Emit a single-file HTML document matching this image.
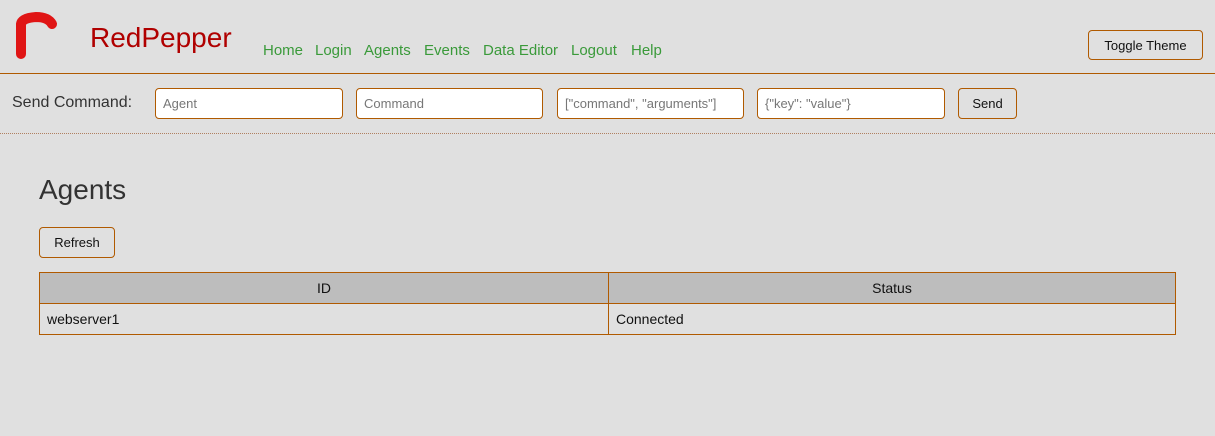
<!DOCTYPE html>
<html><head><style>
body{margin:0;background:#e0e0e0;width:1215px;height:436px;position:relative;font-family:"Liberation Sans",sans-serif;overflow:hidden;color:#333}
.a{position:absolute}
.hdr{top:0;left:0;width:1215px;height:73px;border-bottom:1px solid #b05a00}
.nav a{color:#3a9a3a;text-decoration:none;font-size:15px;position:absolute;top:42px}
.btn{position:absolute;border:1px solid #b05a00;border-radius:4px;background:#e0e0e0;font-size:13px;color:#111;display:flex;align-items:center;justify-content:center;box-sizing:border-box}
.in{position:absolute;top:88px;height:31px;border:1px solid #b05a00;border-radius:4px;background:#fff;box-sizing:border-box;font-size:13px;color:#777;padding-left:7px;line-height:29px}
table{border-collapse:collapse;position:absolute;left:39px;top:272px;width:1137px;font-size:14px;color:#111}
td,th{border:1px solid #b05a00;height:30px;padding:0 7px;font-weight:normal}
th{background:#bdbdbd;text-align:center}
</style></head><body>
<div class="a hdr"></div>
<svg class="a" style="left:12px;top:12px" width="48" height="48" viewBox="0 0 48 48"><path d="M9 42 V12 Q10 6 24 5 Q36 5 40 12" stroke="#e01515" stroke-width="10" fill="none" stroke-linecap="round"/></svg>
<div class="a" style="left:90px;top:22px;font-size:28px;color:#b00000">RedPepper</div>
<div class="nav"><a style="left:263px">Home</a><a style="left:315px">Login</a><a style="left:364px">Agents</a><a style="left:424px">Events</a><a style="left:483px">Data Editor</a><a style="left:571px">Logout</a><a style="left:631px">Help</a></div>
<div class="btn" style="left:1088px;top:30px;width:115px;height:30px">Toggle Theme</div>
<div class="a" style="left:12px;top:94px;font-size:16px">Send Command:</div>
<div class="in" style="left:155px;width:188px">Agent</div>
<div class="in" style="left:356px;width:187px">Command</div>
<div class="in" style="left:557px;width:187px">["command", "arguments"]</div>
<div class="in" style="left:757px;width:188px">{"key": "value"}</div>
<div class="btn" style="left:958px;top:88px;width:59px;height:31px">Send</div>
<div class="a" style="left:0;top:133px;width:1215px;border-top:1px dotted #b08060"></div>
<div class="a" style="left:39px;top:174px;font-size:28px">Agents</div>
<div class="btn" style="left:39px;top:227px;width:76px;height:31px">Refresh</div>
<table><tr><th>ID</th><th>Status</th></tr><tr><td style="width:554px">webserver1</td><td>Connected</td></tr></table>
</body></html>
